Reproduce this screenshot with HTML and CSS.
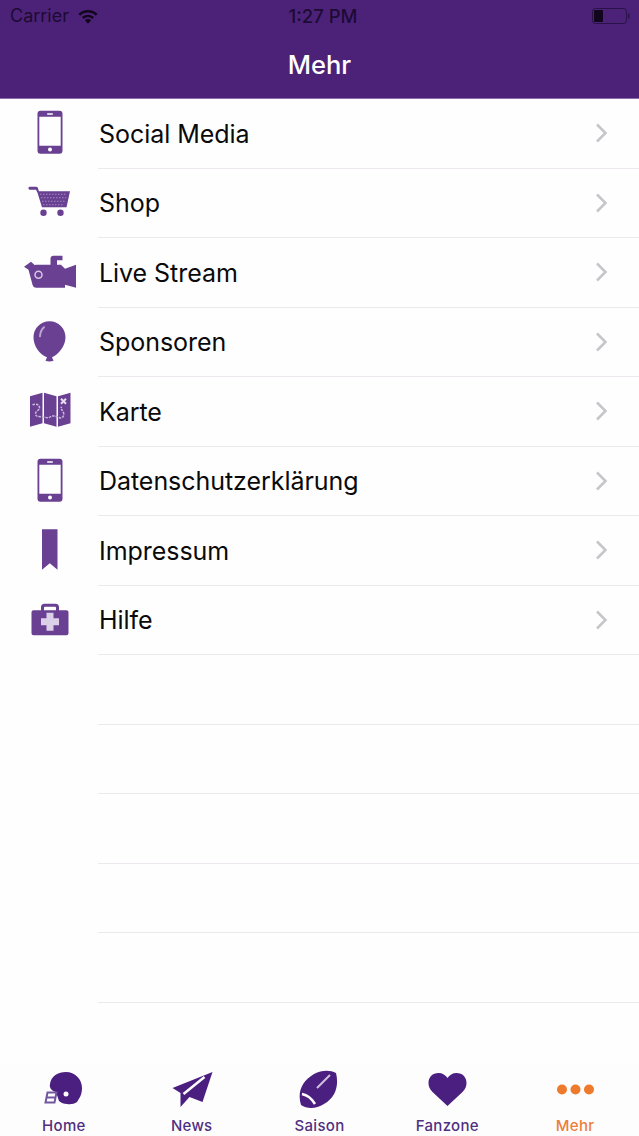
FILE: index.html
```html
<!DOCTYPE html>
<html lang="de">
<head>
<meta charset="utf-8">
<title>Mehr</title>
<link rel="stylesheet" href="styles.css">
</head>
<body>
<div class="page">
  <header class="header">
    <div class="status">
      <div class="status-left">
        <span class="carrier">Carrier</span>
        <svg class="wifi" viewBox="0 0 20 16"><path d="M10 2C6.300 2 3 3.400.5 5.800l1.700 1.900C4.300 5.700 7 4.600 10 4.600s5.700 1.100 7.800 3.100l1.700-1.900C17 3.400 13.700 2 10 2z"/><path d="M10 6.700c-2.400 0-4.500.9-6.100 2.400l1.700 1.900c1.200-1.100 2.700-1.700 4.400-1.700s3.200.6 4.400 1.700l1.700-1.900c-1.600-1.500-3.700-2.400-6.100-2.400z"/><path d="M10 11c-1.300 0-2.400.5-3.200 1.200L10 15.800l3.200-3.600C12.400 11.500 11.300 11 10 11z"/></svg>
      </div>
      <span class="clock">1:27 PM</span>
      <svg class="battery" viewBox="0 0 39 16"><rect x=".5" y=".5" width="34" height="15" rx="3" fill="none" stroke="#2a1248" stroke-width="1"/><rect x="2" y="2" width="9" height="12" rx="1" fill="#12061f"/><rect x="36" y="5.500" width="1.500" height="5" fill="#2a1248"/></svg>
    </div>
    <div class="title-bar"><h1 class="title">Mehr</h1></div>
  </header>

  <main class="list">
    <div class="row">
      <div class="row-icon"><svg class="glyph" viewBox="19.5 108.25 60 50"><path fill-rule="evenodd" d="M40 111h19a3 3 0 0 1 3 3v37a3 3 0 0 1-3 3H40a3 3 0 0 1-3-3v-37a3 3 0 0 1 3-3zM38.800 117v29h21.400v-29z"/><rect class="cut" x="46.500" y="113.500" width="6" height="1.500" rx=".7"/><circle class="cut" cx="49.500" cy="149.800" r="2"/></svg></div>
      <span class="label">Social Media</span>
      <svg class="chevron" viewBox="0 0 13 20"><path d="M2 1.500l8.500 8.500L2 18.500"/></svg>
    </div>
    <div class="row">
      <div class="row-icon"><svg class="glyph" viewBox="19.5 177.750 60 50"><path d="M29 186.500h6.500a2 2 0 0 1 1.900 1.200l1 3.300h31.100l-3.500 16H41.500l-4.500-14.500-1.500-3H30a1.500 1.500 0 0 1-1-3z"/><circle cx="43" cy="212.500" r="3.200"/><circle cx="60" cy="212.500" r="3.200"/><path class="dots" d="M39.500 194h27M40.500 197.500h25M41.500 201h23M42.500 204.500h21"/></svg></div>
      <span class="label">Shop</span>
      <svg class="chevron" viewBox="0 0 13 20"><path d="M2 1.500l8.500 8.500L2 18.500"/></svg>
    </div>
    <div class="row">
      <div class="row-icon"><svg class="glyph" viewBox="19.500 247.250 60 50"><path d="M50 259a3 3 0 0 1 3-3h9v4.500h-5.500v5H50z"/><path d="M23.500 267l7-5 5.500 5-5 5z"/><path d="M28 270l7-5h25.500l4 4 11-4v23l-11-3v3H36a4 4 0 0 1-4-3z"/><circle class="ring" cx="38" cy="275" r="3.500"/></svg></div>
      <span class="label">Live Stream</span>
      <svg class="chevron" viewBox="0 0 13 20"><path d="M2 1.500l8.500 8.500L2 18.500"/></svg>
    </div>
    <div class="row">
      <div class="row-icon"><svg class="glyph" viewBox="19.500 316.750 60 50"><path d="M49 321c9 0 16 7 16 16 0 9-7 17-13.500 20l1.500 3.500q-4 1.500-8 0l1.500-3.500C39 354 33 346 33 337c0-9 7-16 16-16z"/><path class="shine" d="M39.500 336c.3-4 1.700-7 4-9"/></svg></div>
      <span class="label">Sponsoren</span>
      <svg class="chevron" viewBox="0 0 13 20"><path d="M2 1.500l8.500 8.500L2 18.500"/></svg>
    </div>
    <div class="row">
      <div class="row-icon"><svg class="glyph" viewBox="19.500 386.250 60 50"><path d="M29.500 396.500l12.500-3.500v30.500l-12.500 3.500zM43.500 393l12.500 3.500V427l-12.500-3.500zM57.500 396.500l12.500-3.500v30.500L57.500 427z"/><path class="trail" d="M32 405c4-1.500 7 0 7 3s-4 3-4 6 3 3 6 3 6 2 9 0 6 0 9 1 5-2 4-5-3-3-2-6"/><path class="mark" d="M60.500 399l5 5M65.500 399l-5 5"/></svg></div>
      <span class="label">Karte</span>
      <svg class="chevron" viewBox="0 0 13 20"><path d="M2 1.500l8.500 8.500L2 18.500"/></svg>
    </div>
    <div class="row">
      <div class="row-icon"><svg class="glyph" viewBox="19.500 455.750 60 50"><path fill-rule="evenodd" d="M40 458.500h19a3 3 0 0 1 3 3v37a3 3 0 0 1-3 3H40a3 3 0 0 1-3-3v-37a3 3 0 0 1 3-3zM38.800 464.500v29h21.400v-29z"/><rect class="cut" x="46.500" y="461" width="6" height="1.500" rx=".7"/><circle class="cut" cx="49.500" cy="497.300" r="2"/></svg></div>
      <span class="label">Datenschutzerklärung</span>
      <svg class="chevron" viewBox="0 0 13 20"><path d="M2 1.500l8.500 8.500L2 18.500"/></svg>
    </div>
    <div class="row">
      <div class="row-icon"><svg class="glyph" viewBox="19.500 525.250 60 50"><path d="M41.500 529.500h15.500v40.500l-7.700-6.500-7.800 6.500z"/></svg></div>
      <span class="label">Impressum</span>
      <svg class="chevron" viewBox="0 0 13 20"><path d="M2 1.500l8.500 8.500L2 18.500"/></svg>
    </div>
    <div class="row">
      <div class="row-icon"><svg class="glyph" viewBox="19.500 594.750 60 50"><path fill-rule="evenodd" d="M33 610h7.500v-3a3.500 3.500 0 0 1 3.500-3.500h11a3.500 3.500 0 0 1 3.500 3.500v3H66a2 2 0 0 1 2 2v21a2 2 0 0 1-2 2H33a2 2 0 0 1-2-2v-21a2 2 0 0 1 2-2zM43.500 610h12v-2.500a1 1 0 0 0-1-1h-10a1 1 0 0 0-1 1z"/><path class="cross" d="M46 612.500h7v5.500h5.500v7H53v5.500h-7V625h-5.500v-7H46z"/></svg></div>
      <span class="label">Hilfe</span>
      <svg class="chevron" viewBox="0 0 13 20"><path d="M2 1.500l8.500 8.500L2 18.500"/></svg>
    </div>
    <div class="row"></div>
    <div class="row"></div>
    <div class="row"></div>
    <div class="row"></div>
    <div class="row"></div>
  </main>

  <nav class="tabs">
    <div class="tab">
      <svg class="tab-icon" viewBox="34 1068 60 40"><path d="M50 1084c1-8 8-12 16-12 9 0 16 7 16 16 0 4-1 7-2 9l-3 5c-3 2-6 2.500-10 2-3 0-6-1-8-3l-3-9c-4-1-7-4-6-8z"/><circle class="eye" cx="66" cy="1094" r="2.500"/><path class="mask" d="M47.500 1092.500h9l-2 10h-9zM46.500 1097.500h9"/></svg>
      <span class="tab-label">Home</span>
    </div>
    <div class="tab">
      <svg class="tab-icon" viewBox="161.500 1068 60 40"><path d="M212 1072l-40 16 8 5v14l9-10 13 5z"/><path class="crease" d="M204 1077l-21 17"/></svg>
      <span class="tab-label">News</span>
    </div>
    <div class="tab">
      <svg class="tab-icon" viewBox="289 1068 60 40"><path d="M301 1105c-4-13 1-24 13-31 8-4 16-4 22-1 3 12 0 24-12 31-8 5-17 5-23 1z"/><path class="crease" d="M302 1094c5 1 10 5 13 10"/><path class="crease-thin" d="M317 1088l13-13"/></svg>
      <span class="tab-label">Saison</span>
    </div>
    <div class="tab">
      <svg class="tab-icon" viewBox="416.500 1068 60 40"><path d="M447 1106l-15-14c-3-3-4-6-4-9 0-6 4-10 10-10 4 0 7 2 9 5 2-3 5-5 9-5 6 0 10 4 10 10 0 3-1 6-4 9z"/></svg>
      <span class="tab-label">Fanzone</span>
    </div>
    <div class="tab tab-active">
      <svg class="tab-icon" viewBox="544 1068 60 40"><circle cx="561" cy="1089.500" r="5"/><circle cx="574.500" cy="1089.500" r="5"/><circle cx="588" cy="1089.500" r="5"/></svg>
      <span class="tab-label">Mehr</span>
    </div>
  </nav>
</div>
</body>
</html>
```

FILE: styles.css
```css
* {
  box-sizing: border-box;
}

html,
body {
  margin: 0;
  padding: 0;
  background: #fff;
}

body {
  font-family: Inter, "Liberation Sans", sans-serif;
}

.page {
  display: flex;
  flex-direction: column;
  height: 1136px;
  overflow: hidden;
}

.header {
  background: #4c2278;
  border-bottom: 1px solid #8c6cae;
  height: 99px;
  flex: none;
}

.status {
  display: grid;
  grid-template-columns: 1fr auto 1fr;
  align-items: center;
  height: 32px;
  padding: 0 3px 0 10px;
  color: #1d0a35;
}

.status-left {
  display: flex;
  align-items: center;
  gap: 9px;
}

.carrier {
  font-size: 18px;
  line-height: 20px;
}

.wifi {
  width: 20px;
  height: 16px;
  fill: #12061f;
}

.clock {
  font-size: 18.500px;
  font-weight: 500;
  line-height: 20px;
}

.battery {
  justify-self: end;
  width: 39px;
  height: 16px;
  margin-right: 5px;
}

.title-bar {
  display: flex;
  align-items: center;
  justify-content: center;
  height: 66px;
}

.title {
  margin: 0;
  color: #fff;
  font-size: 25.500px;
  font-weight: 500;
  line-height: 30px;
}

.list {
  flex: 1;
  background: #fefefe;
}

.row {
  display: flex;
  align-items: center;
  height: 69.5px;
  margin-left: 98px;
  border-bottom: 1px solid #ece8ee;
  padding-right: 31px;
}

.row-icon {
  display: flex;
  justify-content: center;
  width: 99px;
  margin-left: -98px;
  flex: none;
}

.glyph {
  width: 60px;
  height: 50px;
  fill: #6a4093;
}

.cut {
  fill: #fff;
}

.dots {
  fill: none;
  stroke: #a48dc0;
  stroke-width: 1;
  stroke-dasharray: 1.500 1.500;
}

.ring {
  fill: none;
  stroke: #d5c8e2;
  stroke-width: 1.500;
}

.shine {
  fill: none;
  stroke: #b9a3d0;
  stroke-width: 2;
  stroke-linecap: round;
}

.trail {
  fill: none;
  stroke: #c9b8da;
  stroke-width: 1.500;
  stroke-dasharray: 2.500 1;
}

.mark {
  fill: none;
  stroke: #e6deee;
  stroke-width: 2;
}

.cross {
  fill: #dcd0e8;
}

.label {
  flex: 1;
  padding-top: 1px;
  color: #0a0a0a;
  font-size: 25px;
  line-height: 30px;
  letter-spacing: -.05px;
}

.chevron {
  width: 13px;
  height: 20px;
  fill: none;
  stroke: #c5c5ca;
  stroke-width: 2.500;
}

.tabs {
  display: grid;
  grid-template-columns: repeat(5, 1fr);
  flex: none;
  height: 72px;
  padding-top: 4px;
  background: #fefdfe;
}

.tab {
  display: flex;
  flex-direction: column;
  align-items: center;
  color: #4f3080;
}

.tab-icon {
  width: 60px;
  height: 40px;
  fill: #4b1f80;
}

.tab-label {
  margin-top: 9px;
  font-size: 15px;
  font-weight: 500;
  line-height: 18px;
  letter-spacing: .3px;
}

.tab-active {
  color: #ed7d3a;
}

.tab-active .tab-icon {
  fill: #ee7a2c;
}

.eye {
  fill: #fff;
}

.mask {
  fill: none;
  stroke: #7257a0;
  stroke-width: 2;
}

.crease {
  fill: none;
  stroke: #fefdfe;
  stroke-width: 2.500;
}

.crease-thin {
  fill: none;
  stroke: #cfc2df;
  stroke-width: 2;
}
```
